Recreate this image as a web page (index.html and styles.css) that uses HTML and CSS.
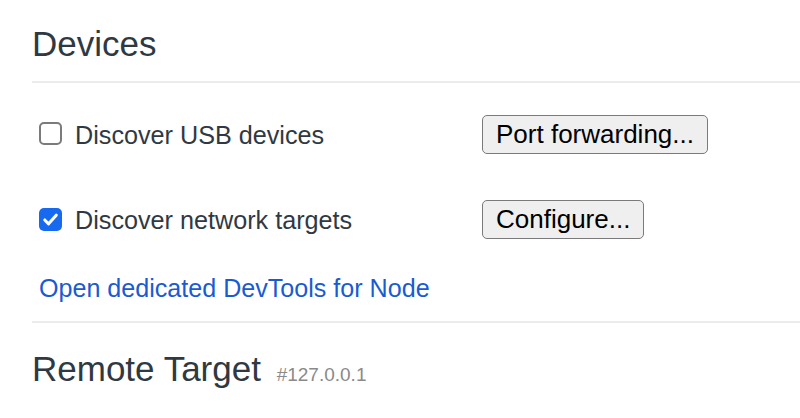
FILE: index.html
```html
<!DOCTYPE html>
<html lang="en">
<head>
  <meta charset="UTF-8" />
  <title>Inspect with Chrome Developer Tools</title>
  <link rel="stylesheet" href="styles.css">
</head>
<body>
  <div class="page">
    <h1 class="section-title">Devices</h1>
    <div class="section-body">
      <div class="row">
        <label class="check">
          <span class="box"></span>
          <span>Discover USB devices</span>
        </label>
        <button class="btn">Port forwarding...</button>
      </div>

      <div class="row row-second">
        <label class="check">
          <span class="box checked">
            <svg viewBox="0 0 24 24" width="23" height="23">
              <path d="M6 12.5l4 4 8-9" fill="none" stroke="#fff" stroke-width="3.2" stroke-linecap="round" stroke-linejoin="round"/>
            </svg>
          </span>
          <span>Discover network targets</span>
        </label>
        <button class="btn">Configure...</button>
      </div>

      <a class="node-link" href="#">Open dedicated DevTools for Node</a>
    </div>

    <h1 class="section-title remote">Remote Target <span class="host">#127.0.0.1</span></h1>
  </div>
</body>
</html>
```

FILE: styles.css
```css
:root {
  --text: #303942;
  --link: #1a5bd1;
  --line: #ececec;
  --check: #1769f0;
}

body {
  margin: 0;
  font-family: "Liberation Sans", Arial, sans-serif;
  color: var(--text);
  background: #fff;
}

.page {
  padding-left: 32px;
}

.section-title {
  margin: 23px 0 0;
  font-size: 35px;
  line-height: 42px;
  font-weight: normal;
  color: var(--text);
}

.section-title.remote {
  margin-top: 25px;
}

.host {
  margin-left: 6px;
  font-size: 19px;
  color: #8a8a8a;
}

.section-body {
  margin-top: 16px;
  border-top: 2px solid var(--line);
  border-bottom: 2px solid var(--line);
  padding: 32px 0 19px 7px;
}

.row {
  display: flex;
  align-items: center;
  height: 39px;
}

.row-second {
  margin-top: 46px;
}

.check {
  display: flex;
  align-items: center;
  gap: 13px;
  width: 443px;
  font-size: 25.2px;
  line-height: 28px;
}

.box {
  width: 19px;
  height: 19px;
  border: 2px solid #7b7b7b;
  border-radius: 5px;
  margin-top: -3px;
  display: flex;
  align-items: center;
  justify-content: center;
}

.box.checked {
  width: 23px;
  height: 23px;
  border: none;
  background: var(--check);
  margin-top: 0;
}

.btn {
  height: 39px;
  padding: 0 13px;
  font-family: inherit;
  font-size: 26px;
  color: #000;
  background: #efefef;
  border: 1.5px solid #7a7a7a;
  border-radius: 5px;
}

.node-link {
  display: block;
  margin-top: 35px;
  font-size: 25.1px;
  line-height: 28px;
  color: var(--link);
  text-decoration: none;
}
```
